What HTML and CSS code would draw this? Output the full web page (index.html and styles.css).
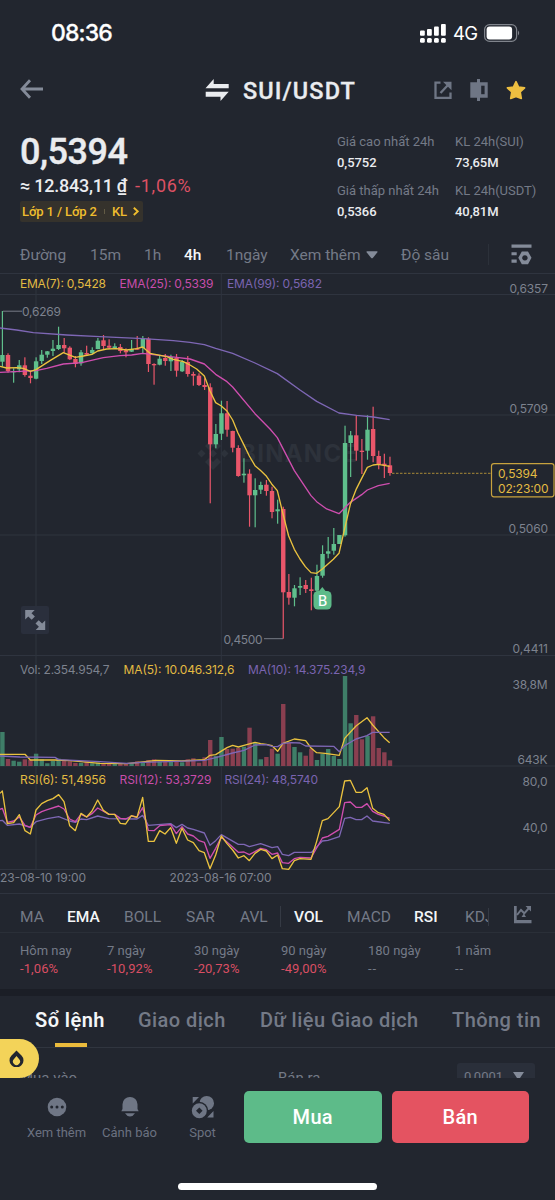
FILE: index.html
```html
<!DOCTYPE html>
<html lang="vi">
<head>
<meta charset="utf-8">
<title>SUI/USDT</title>
<link rel="stylesheet" href="styles.css">
</head>
<body>
<main class="app">
  <header class="status">
    <span class="clock">08:36</span>
    <span class="status-right">
      <svg width="26" height="19" viewBox="0 0 26 19" fill="#fff"><rect x="0" y="6.500" width="4.800" height="5.200" rx="1"/><rect x="7" y="5" width="4.800" height="6.700" rx="1"/><rect x="14" y="2.500" width="4.800" height="9.200" rx="1"/><rect x="21" y="0" width="4.800" height="11.700" rx="1"/><rect x="0" y="14" width="4.800" height="4.800" rx="1.500"/><rect x="7" y="14" width="4.800" height="4.800" rx="1.500"/><rect x="14" y="14" width="4.800" height="4.800" rx="1.500"/><rect x="21" y="14" width="4.800" height="4.800" rx="1.500"/></svg>
      <span class="net">4G</span>
      <svg width="36" height="18" viewBox="0 0 36 18"><rect x=".6" y=".6" width="32" height="16.800" rx="5" fill="none" stroke="#80848c" stroke-width="1.200"/><rect x="2.600" y="2.600" width="25.500" height="12.800" rx="3" fill="#fff"/><path d="M34 6.500q2.400 2.500 0 5z" fill="#80848c"/></svg>
    </span>
  </header>

  <nav class="titlebar">
    <svg class="back" width="24" height="20" viewBox="0 0 24 20" fill="none" stroke="#848b99" stroke-width="2.800"><path d="M23 10H2.500M10 1.300L2 10l8 8.700"/></svg>
    <svg class="swap" width="24" height="22" viewBox="0 0 24 22" fill="#eaecef"><path d="M.5 9.200L8.700 0V5h15v4.200zM23.700 12.700L15.500 22v-4.300H.700v-5z"/></svg>
    <h1 class="pair">SUI/USDT</h1>
    <div class="title-icons">
      <svg width="18" height="19" viewBox="0 0 18 19" fill="none" stroke="#6f7685" stroke-width="2.300"><path d="M6.500 1.600H1.500v15.300H16.500V11.500M6.500 12L14.500 3.500"/><path d="M9 .8h8.500v8.500z" fill="#6f7685" stroke="none"/></svg>
      <svg width="18" height="22" viewBox="0 0 18 22" fill="#6f7685"><path d="M.3 3.200H7V.1h3v3.100h7.700v15.500H10v3.200H7v-3.200H.300z"/><path d="M11.200 6.700h3.400v8.500h-3.400z" fill="#22262f"/></svg>
      <svg width="20" height="21" viewBox="0 0 20 20"><path d="M10 1.100l2.600 5.400 6 .8-4.400 4.200 1.100 6.500L10 15.900l-5.300 2.100 1.100-6.500-4.400-4.200 6-.8z" fill="#eebf41" stroke="#eebf41" stroke-width="1.600" stroke-linejoin="round"/></svg>
    </div>
  </nav>

  <section class="ticker">
    <div class="quote">
      <div class="price">0,5394</div>
      <div class="fiat"><span class="fiat-value">≈ 12.843,11 ₫</span><span class="fiat-change">-1,06%</span></div>
      <div class="tag"><span>Lớp 1 / Lớp 2</span><i></i><span>KL</span><svg width="6" height="9" viewBox="0 0 6 9" fill="none" stroke="#efbd2e" stroke-width="1.900"><path d="M.8.8L4.700 4.400.8 8"/></svg></div>
    </div>
    <dl class="stats">
      <div><dt>Giá cao nhất 24h</dt><dd>0,5752</dd></div>
      <div><dt>KL 24h(SUI)</dt><dd>73,65M</dd></div>
      <div><dt>Giá thấp nhất 24h</dt><dd>0,5366</dd></div>
      <div><dt>KL 24h(USDT)</dt><dd>40,81M</dd></div>
    </dl>
  </section>

  <nav class="intervals">
    <span>Đường</span><span>15m</span><span>1h</span><span class="on">4h</span><span>1ngày</span>
    <span class="more">Xem thêm<svg width="12" height="8" viewBox="0 0 12 8" fill="#848b99"><path d="M1 .3h10q1 0 .4 1L7 6.800q-1 1-2 0L.6 1.300Q0 .3 1 .3z"/></svg></span>
    <span>Độ sâu</span><i class="divider"></i>
    <svg width="21" height="21" viewBox="0 0 21 21" fill="#848b99"><path d="M.5.500h20v3.200H.500zM.500 8.300h5.200v3H.500zM.500 15.600h5.200v3.200H.500z"/><path fill-rule="evenodd" d="M10.800 7.500h6.200l3.500 6.300-3.500 6.500h-6.200l-3.500-6.500zM13.900 11.200a2.700 2.700 0 1 0 .01 0z"/></svg>
  </nav>

  <svg class="chart" id="chart" viewBox="0 273 555 620" width="555" height="620">
    <g class="grid">
      <path d="M0 273.500H555M0 294.500H555M0 415H555M0 535H555M0 655.500H555M0 766H555M0 869.500H555M36 273V869M221.300 273V869"/>
    </g>
    <g class="watermark">
      <path d="M213 438l8 8-4 4-4-4-4 4-4-4zM201.500 449.500l4 4-4 4-4-4zM213 449.500l4 4-4 4-4-4zM224.500 449.500l4 4-4 4-4-4zM213 470l-8-8 4-4 4 4 4-4 4 4z"/>
      <text x="240" y="462" textLength="117">BINANCE</text>
    </g>
    <path class="last-line" d="M392 473.300H491"/>
    <g id="bars"></g>
    <g id="candles"></g>
    <g class="lines" transform="translate(0 270) scale(.33333)">
      <polyline class="violet" points="0,174 50,180 100,188 200,195 300,200 430,206 520,212 570,217 613,224 647,235 698,250 765,279 832,311 900,360 950,394 1017,429 1070,436 1120,441 1169,449"/>
      <polyline class="pink" points="0,307 60,304 108,302 140,295 190,282 245,278 310,263 360,257 395,255 428,250 460,254 530,262 570,267 613,282 647,313 681,335 698,351 765,431 810,477 832,503 883,602 933,677 950,695 980,717 1017,731 1051,697 1085,674 1102,660 1135,647 1169,640"/>
      <polyline class="yellow" points="0,289 20,294 50,293 70,295 91,304 108,299 150,272 190,248 226,262 250,258 276,253 293,243 320,237 350,236 380,240 410,236 428,231 450,250 500,260 520,268 550,275 570,285 590,297 613,318 630,363 647,398 664,408 681,423 698,450 714,489 731,523 748,558 765,587 781,601 798,617 815,642 832,662 849,732 866,798 883,838 900,867 916,890 933,908 950,910 967,897 1000,868 1017,850 1034,776 1051,703 1068,659 1085,625 1102,592 1119,585 1135,583 1169,589"/>
    </g>
    <g class="lines" transform="translate(0 600) scale(.33333)">
      <polyline class="yellow" points="0,463 75,463 91,480 165,480 210,482 300,490 380,491 428,486 470,481 545,483 613,479 630,466 647,464 681,443 698,436 715,441 732,436 765,427 782,431 799,433 816,437 833,454 849,430 883,417 917,422 933,444 950,458 975,460 1018,466 1034,415 1068,378 1101,353 1118,375 1152,413 1169,428"/>
      <polyline class="violet" points="0,468 60,471 165,472 176,479 300,485 380,490 428,487 530,484 613,481 650,472 698,459 732,451 765,435 799,434 816,439 833,440 849,430 875,428 900,429 917,438 1001,439 1018,455 1034,437 1068,417 1101,407 1118,397 1169,397"/>
      <polyline class="violet" points="0,662 7,661 22,676 58,672 91,682 108,665 142,656 176,650 209,663 226,667 243,657 260,659 293,648 327,656 411,657 428,646 445,676 512,671 529,683 546,673 563,684 580,688 613,699 630,736 647,722 664,704 715,733 732,733 748,740 782,731 816,743 833,740 847,763 866,767 883,757 935,757 967,723 984,721 1018,710 1034,655 1051,652 1068,659 1085,659 1101,648 1118,663 1169,670"/>
      <polyline class="pink" points="0,628 7,625 22,667 41,663 58,651 75,676 91,682 108,645 125,635 142,629 176,618 192,627 209,657 226,665 243,643 260,651 276,641 293,624 327,643 344,643 361,655 377,657 394,648 411,651 428,623 445,691 462,692 479,677 512,674 529,701 546,680 563,702 580,708 597,722 613,727 630,775 647,745 664,711 715,757 732,756 748,764 782,745 799,749 816,763 833,759 847,788 866,790 883,776 900,772 933,774 967,714 984,709 1018,688 1034,608 1051,606 1068,622 1085,622 1101,611 1118,634 1135,643 1152,648 1169,655"/>
      <polyline class="yellow" points="0,580 7,573 22,671 41,668 58,644 75,692 91,702 108,630 125,611 142,602 159,596 176,584 192,605 209,677 226,692 243,640 260,651 276,633 293,600 310,631 327,643 344,643 361,670 377,672 394,647 411,652 428,592 445,724 462,724 479,692 495,702 512,683 529,730 546,685 563,720 580,728 597,752 613,758 630,806 647,765 664,708 681,731 698,750 715,774 732,767 748,782 765,760 782,748 799,753 816,776 833,765 847,806 866,808 883,782 900,776 933,778 950,724 967,662 984,656 1001,638 1018,620 1034,543 1051,541 1068,577 1085,577 1101,563 1118,625 1135,638 1152,643 1169,662"/>
    </g>
    <path class="leader" d="M3 311.200H22M264 638.700H283"/>
    <g class="label">
      <text x="22" y="316" textLength="39">0,6269</text>
      <text x="223.500" y="643.500" textLength="39">0,4500</text>
      <text x="509.500" y="293" textLength="38.500">0,6357</text>
      <text x="509.500" y="413" textLength="38.500">0,5709</text>
      <text x="508.500" y="533" textLength="39.500">0,5060</text>
      <text x="512.500" y="653" textLength="35.500">0,4411</text>
      <text x="512.500" y="688.500" textLength="35">38,8M</text>
      <text x="517.500" y="763.500" textLength="30">643K</text>
      <text x="522.500" y="786" textLength="25">80,0</text>
      <text x="522.500" y="831.500" textLength="25">40,0</text>
      <text x="0" y="881.500" textLength="86">23-08-10 19:00</text>
      <text x="169.500" y="881.500" textLength="102">2023-08-16 07:00</text>
      <text x="20" y="674" textLength="89.500">Vol: 2.354.954,7</text>
    </g>
    <g class="label legend">
      <text class="c-yellow" x="20" y="288" textLength="86">EMA(7): 0,5428</text>
      <text class="c-pink" x="119.500" y="288" textLength="94">EMA(25): 0,5339</text>
      <text class="c-violet" x="227" y="288" textLength="95">EMA(99): 0,5682</text>
      <text class="c-yellow" x="123.500" y="674" textLength="111">MA(5): 10.046.312,6</text>
      <text class="c-violet" x="248" y="674" textLength="117.500">MA(10): 14.375.234,9</text>
      <text class="c-yellow" x="20" y="784" textLength="86">RSI(6): 51,4956</text>
      <text class="c-pink" x="119.500" y="784" textLength="92">RSI(12): 53,3729</text>
      <text class="c-violet" x="224.500" y="784" textLength="93.500">RSI(24): 48,5740</text>
    </g>
    <rect class="price-box" x="491.500" y="463.600" width="62.500" height="33.200" rx="2.500"/>
    <g class="label legend">
      <text class="c-yellow" x="498" y="478" textLength="39.500">0,5394</text>
      <text class="c-yellow" x="498" y="492.500" textLength="50.500">02:23:00</text>
    </g>
    <g>
      <path d="M322.300 587l4 5h-8z" fill="#5dbb89"/>
      <rect x="313.500" y="591" width="18" height="18.500" rx="4.500" fill="#5dbb89"/>
      <text class="buy-mark" x="322.500" y="605.500">B</text>
    </g>
    <rect x="21" y="606" width="28" height="28" rx="2" fill="#2a2f3c"/>
    <path d="M25.200 610h9.500l-3.200 3.200 3.400 3.400-3.200 3.200-3.400-3.400-3.100 3.100zM45.200 630h-9.500l3.200-3.200-3.400-3.400 3.200-3.200 3.400 3.400 3.100-3.100z" fill="#848b99"/>
  </svg>

  <nav class="indicators">
    <span>MA</span><span class="on">EMA</span><span>BOLL</span><span>SAR</span><span>AVL</span><i class="divider"></i><span class="on">VOL</span><span>MACD</span><span class="on">RSI</span><span class="clip">KDJ</span>
    <svg width="20" height="19" viewBox="0 0 20 19" fill="#6f7685"><path d="M1 1h2.700v14H18.500v3.300H1z"/><path d="M4 10L8 5l3.300 3.300L16 3" fill="none" stroke="#6f7685" stroke-width="2"/><path d="M12.500 1H18v5.500zM10.800 8.500l2.200 3.500H8.500z"/></svg>
  </nav>

  <section class="periods">
    <div><span>Hôm nay</span><b>-1,06%</b></div>
    <div><span>7 ngày</span><b>-10,92%</b></div>
    <div><span>30 ngày</span><b>-20,73%</b></div>
    <div><span>90 ngày</span><b>-49,00%</b></div>
    <div><span>180 ngày</span><b class="none">--</b></div>
    <div><span>1 năm</span><b class="none">--</b></div>
  </section>

  <nav class="tabs">
    <span class="on">Sổ lệnh</span><span>Giao dịch</span><span>Dữ liệu Giao dịch</span><span>Thông tin</span>
  </nav>

  <section class="book">
    <span>Mua vào</span><span>Bán ra</span>
    <div class="step">0,0001<svg width="11" height="8" viewBox="0 0 11 8" fill="#848b99"><path d="M0 0h11L7 6q-1.500 2-3 0z"/></svg></div>
    <div class="hot"><svg width="15" height="17" viewBox="0 0 15 17"><path fill="#22262f" fill-rule="evenodd" d="M7.500.500L12.500 5.500a7 7 0 1 1-10 0zM7.500 6L5 9a3.500 3.500 0 1 0 5 0z"/></svg></div>
  </section>

  <footer class="dock">
    <div class="dock-row">
      <div class="dock-item"><svg width="24" height="24" viewBox="0 0 24 24"><circle cx="12" cy="12" r="9.300" fill="#6f7685"/><g fill="#22262f"><circle cx="6.700" cy="12" r="1.500"/><circle cx="12" cy="12" r="1.500"/><circle cx="17.300" cy="12" r="1.500"/></g></svg><span>Xem thêm</span></div>
      <div class="dock-item"><svg width="24" height="24" viewBox="0 0 24 24" fill="#6f7685"><path d="M12 2a7.300 7.300 0 0 1 7.500 7.300V14l1.200 2.200H3.300L4.500 14V9.300A7.300 7.300 0 0 1 12 2zM7 18.300h10Q15 21.500 12 21.500T7 18.300z"/></svg><span>Cảnh báo</span></div>
      <div class="dock-item"><svg width="24" height="24" viewBox="0 0 24 24"><path d="M1.700 2H8L1.700 8.500zM22.500 16v6.500h-6.300z" fill="#6f7685"/><circle cx="15.700" cy="8.200" r="7.300" fill="#6f7685"/><circle cx="8.300" cy="15.800" r="9" fill="#22262f"/><circle cx="8.300" cy="15.800" r="7.500" fill="#6f7685"/><path d="M8.300 12.500l3.300 3.300-3.300 3.300L5 15.800z" fill="#22262f"/></svg><span>Spot</span></div>
      <button class="buy">Mua</button>
      <button class="sell">Bán</button>
    </div>
    <div class="home"></div>
  </footer>
</main>
<script src="chart.js"></script>
</body>
</html>
```
FILE: styles.css
```css
* { box-sizing: border-box; }
body { margin: 0; background: #22262f; }
.app {
  width: 555px; height: 1200px; overflow: hidden;
  display: flex; flex-direction: column;
  background: #22262f; color: #eaecef;
  font-family: Roboto, "Noto Sans", sans-serif;
}
.app svg { display: block; flex: none; }

.status { height: 64px; padding: 2px 35px 0 51px; display: flex; align-items: center; justify-content: space-between; font-family: Inter, sans-serif; color: #fff; }
.clock { font-size: 23px; font-weight: 500; letter-spacing: -.85px; -webkit-text-stroke: .3px #fff; }
.status-right { display: flex; align-items: center; }
.status-right .net { width: 25px; margin: 0 6px 0 7px; font-size: 18.500px; letter-spacing: -.6px; }

.titlebar { height: 62px; padding: 0 29px 10px 20px; display: flex; align-items: center; }
.titlebar .back { margin-top: -3px; }
.titlebar .swap { margin-left: 161px; }
.pair { margin: 1px 0 0 14px; width: 178px; font-size: 23.500px; font-weight: 500; letter-spacing: 1.100px; -webkit-text-stroke: .3px #eaecef; }
.title-icons { display: flex; align-items: center; gap: 18px; margin-left: 14px; }

.ticker { height: 110px; padding: 0 0 0 20px; display: flex; }
.quote { width: 317px; padding-top: 8px; }
.price { font-size: 36px; line-height: 36px; font-weight: 500; letter-spacing: -.5px; -webkit-text-stroke: .4px #eaecef; }
.fiat { display: flex; margin-top: 5px; line-height: 22px; font-size: 18px; }
.fiat-value { width: 115px; font-weight: 500; letter-spacing: -.25px; white-space: nowrap; }
.fiat-change { color: #dd5164; letter-spacing: .75px; }
.tag { display: flex; align-items: center; width: 123px; height: 21px; margin-top: 4px; padding-left: 2px; background: #35322c; border-radius: 2px; color: #efbd2e; font-size: 13px; font-weight: 500; letter-spacing: -.12px; }
.tag i { width: 1px; height: 5px; margin: 0 7px; background: #625b45; }
.tag svg { margin-left: 6px; }
.stats { margin: 0; padding-top: 7px; display: grid; grid-template-columns: 118px 90px; grid-auto-rows: 49px; white-space: nowrap; }
.stats dt { font-size: 13px; line-height: 18px; color: #747a87; letter-spacing: 0; }
.stats dd { margin: 3px 0 0; font-size: 13px; line-height: 18px; font-weight: 500; letter-spacing: -.05px; }

.intervals { height: 37px; display: grid; grid-template-columns: 70px 54px 40px 42px 64px 111px 87px 23px 22px; padding-left: 20px; align-items: center; font-size: 15.500px; color: #747a87; white-space: nowrap; }
.on { color: #f4f6f8; font-weight: 500; }
.more { display: flex; align-items: center; gap: 5px; }
.divider { width: 1px; height: 21px; background: #2c313a; }

.chart { font-family: Inter, sans-serif; }
.grid { fill: none; stroke: #2f343f; }
.watermark { fill: #2d323b; font-size: 24px; font-weight: 700; }
.last-line { stroke: #a98a38; stroke-width: 1; stroke-dasharray: 2.500 1.500; }
.lines polyline { fill: none; stroke-width: 4; stroke-linejoin: round; }
.yellow { stroke: #eac23f; }
.pink { stroke: #cf4eaf; }
.violet { stroke: #7e67b5; }
.leader { stroke: #777c87; fill: none; }
.label { font-size: 12px; fill: #7d828e; }
.legend .c-yellow { fill: #e2bb42; }
.legend .c-pink { fill: #c84dab; }
.legend .c-violet { fill: #7a64b0; }
.price-box { fill: #22262f; stroke: #c7a23e; stroke-width: 1.200; }
.buy-mark { fill: #fff; font-size: 14px; font-weight: 500; text-anchor: middle; }
.up { fill: #5fbf8c; }
.down { fill: #e9566a; }
.vol-up { fill: #3f7e68; }
.vol-down { fill: #8a3f50; }

.indicators { height: 40px; padding: 7px 0 0 20px; border-top: 1px solid #2f343f; border-bottom: 1px solid #2a2f38; display: grid; grid-template-columns: 47px 57px 62px 54px 40px 14px 53px 67px 51px 48px 22px; align-items: center; font-size: 15.500px; color: #747a87; white-space: nowrap; }
.indicators .divider { background: #353a44; }
.indicators svg { margin-top: -4px; }
.clip { width: 24px; overflow: hidden; border-right: 1px solid #353a44; }

.periods { height: 63px; padding: 8px 0 0 20px; border-bottom: 7px solid #1b1e26; display: grid; grid-template-columns: repeat(6, 87px); font-size: 13px; line-height: 19px; }
.periods span, .periods b { display: block; font-weight: 400; }
.periods span { color: #747a87; }
.periods b { margin-top: -1px; color: #d94e63; letter-spacing: .1px; }
.periods b.none { color: #747a87; letter-spacing: 1px; }

.tabs { height: 52px; border-bottom: 1px solid #30353f; display: grid; grid-template-columns: 103px 122px 192px 103px; padding-left: 35px; line-height: 48px; font-size: 20px; font-weight: 500; letter-spacing: .45px; color: #747a87; white-space: nowrap; }
.tabs .on { position: relative; color: #f4f6f8; font-weight: 600; }
.tabs .on::after { content: ""; position: absolute; left: 20px; top: 47px; width: 32px; height: 4px; background: #ebbb3c; }

.book { position: relative; height: 30px; padding: 15px 20px 0; overflow: visible; display: grid; grid-template-columns: 258px 179px 78px; font-size: 15px; color: #747a87; clip-path: inset(-10px 0 0 0); }
.book > span { padding-top: 6px; }
.step { display: flex; justify-content: space-between; height: 30px; padding: 6px 11px 0 7px; border-radius: 3px; background: #2a2f3a; font-size: 13px; }
.step svg { margin-top: 3px; }
.hot { position: absolute; left: 0; top: -9px; width: 39px; height: 39px; padding: 11px 0 0 9px; border-radius: 0 20px 20px 0; background: #f3d359; }

.dock { flex: 1; background: #22262f; }
.dock-row { display: grid; grid-template-columns: 73px 73px 78px 147.500px 137.500px; padding: 13px 0 0 20px; }
.dock-item { width: 73px; display: flex; flex-direction: column; align-items: center; gap: 4px; padding-top: 4px; font-size: 13px; line-height: 20px; color: #6b7180; white-space: nowrap; }
.dock button { width: 137.500px; height: 52px; border: 0; border-radius: 5px; font: 500 20px Roboto, sans-serif; color: #fff; letter-spacing: .3px; }
.buy { background: #5dbb89; }
.sell { background: #e45361; }
.home { width: 199px; height: 7px; margin: 40px 0 0 178px; border-radius: 4px; background: #fff; }
```
FILE: chart.js
```js
// Each candle: direction, wick top, wick bottom, body top, body bottom, volume top.
const candles = `
g 311 366.7 355 361.7 732
r 353.3 372.700 355 371 759
g 368.3 382.700 371 372.200 760.700
g 360 372.3 365.3 369.3 761.700
r 357.3 376.7 365.3 375 759.300
r 371.7 383.3 375.7 378 760
g 357.3 379.3 361.3 378.7 753.700
g 350 364 354.7 361 759.300
g 351 357.7 351.3 354.7 763.300
g 340 356 348.7 351 761
g 326.7 350 345 349 758.700
r 338 352.7 345 348.3 760.700
r 346.3 360 347.7 359.3 761.300
r 356 367.3 359 364 763
g 350 365.7 352.3 363.3 763
r 345.7 355 353 354.7 761.300
g 347.3 354 350 353.3 763.300
g 338 349.3 340.7 349 762.700
r 335 349 340.3 346 763
r 339.3 349 345.7 347.7 763.300
g 343.3 348.7 346.3 348 763.700
r 344 353.3 347 351 763.300
r 348.3 357.3 350.3 352.3 763.300
g 340 352 349 351.7 763.300
r 336 350 348.3 349.7 761.300
g 336 354 338.7 348 762.300
r 337.3 372 338.7 364 760
r 363.3 384.7 364 365.3 759.300
g 355.3 365.3 358.7 364.7 761.700
r 354 365.7 358 361 761.700
g 354.7 371 357 361.3 760
r 354 376.7 358 370.7 761
g 360 372 362 371.3 762.300
r 356 376.7 362 374 759.300
r 371.7 385.7 374 375.7 758.300
r 373.3 386 375.7 385 762.700
r 378.3 390 385 387 757.300
r 383.3 503.3 387.3 444.3 740
g 424 448.3 434 444.3 756
g 400.7 440 413.3 433.7 737
r 401 436.7 413.3 429.7 749
r 430.7 452.3 431 447.7 748.700
r 445.3 476.7 448 476 748
g 458.3 482.7 473.7 475.3 746.700
r 469.3 526.7 473.7 495.3 727.700
g 478.3 527.3 490 495.3 742.700
g 481.7 494 485 489.7 759.300
r 480 495.7 484.7 491 757
r 486.7 518.3 491 512 748.700
g 499.7 523.7 509.3 511.3 753.700
r 506.7 638.7 509 592.3 704
r 574 604.7 592 597.7 742.700
g 585 606.3 588.3 597.7 747
g 577.3 595 586 587.7 752.300
r 580 593 585 589 755.700
r 577.7 610.3 589.3 591 748.700
g 564.7 591.7 576 590.7 760
g 545.3 577.7 554 575.7 754
g 537 558.3 551.3 553.7 749
g 528 554.7 544 550.7 756
g 535 544 535 544 759
g 425.7 536.7 443 535.3 676
g 431 477 435.3 443 723.300
r 416 460.7 435.3 450.7 715
r 439 474 450.7 452 739.300
g 415.3 459.7 429.7 450.7 736
r 406.7 462.3 429 456 716.300
r 450.7 469.3 456 464 748
r 453.7 478 463.7 465.3 752.300
r 456.7 475.7 465.3 473 760.300`.trim().split("\n").map(row => row.split(" "));

const NS = "http://www.w3.org/2000/svg";
function rect(parent, cls, x, y, w, h) {
  const el = document.createElementNS(NS, "rect");
  el.setAttribute("class", cls);
  el.setAttribute("x", x);
  el.setAttribute("y", y);
  el.setAttribute("width", w);
  el.setAttribute("height", h);
  parent.appendChild(el);
}

const candleLayer = document.getElementById("candles");
const barLayer = document.getElementById("bars");
const VOLUME_BASE = 766;

candles.forEach(([dir, ...values], i) => {
  const [high, low, top, bottom, volume] = values.map(Number);
  const x = 2.4 + i * 5.617;
  const name = dir === "g" ? "up" : "down";
  rect(candleLayer, name, x - 0.6, high, 1.2, low - high);
  rect(candleLayer, name, x - 2.2, top, 4.4, Math.max(1.3, bottom - top));
  rect(barLayer, "vol-" + name, x - 2.2, volume, 4.4, VOLUME_BASE - volume);
});
```
